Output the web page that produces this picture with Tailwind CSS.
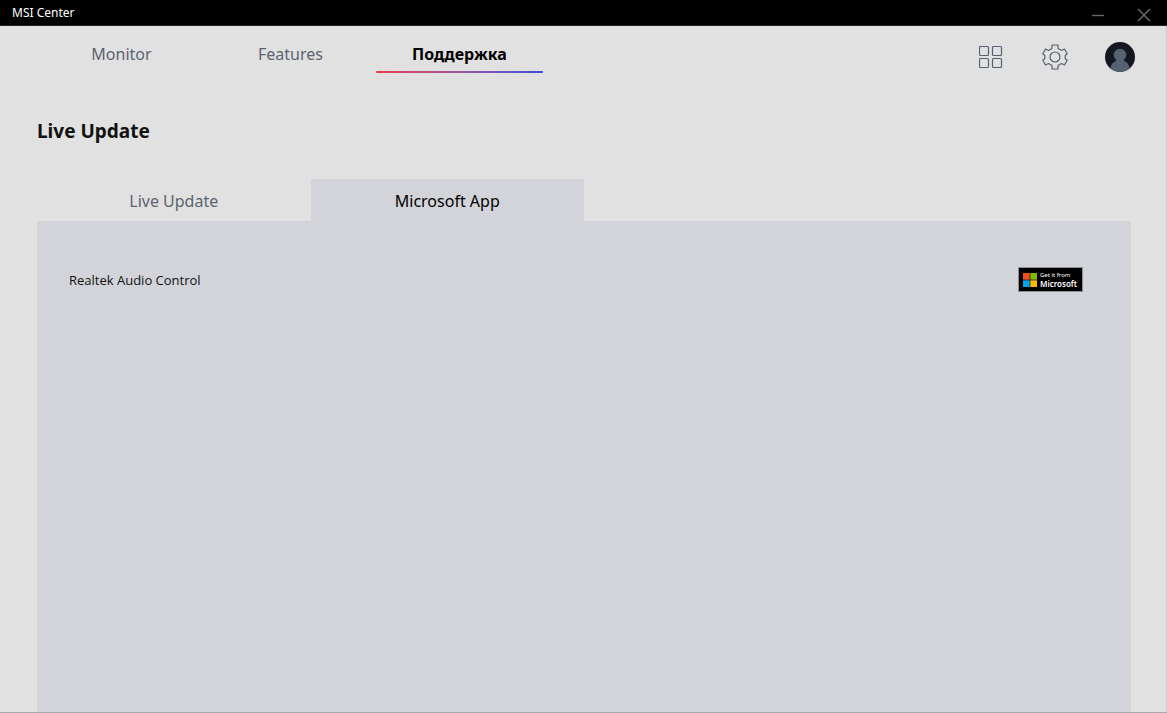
<!DOCTYPE html>
<html lang="ru">
<head>
  <meta charset="UTF-8" />
  <meta name="viewport" content="width=device-width, initial-scale=1.0" />
  <title>MSI Center</title>

  <!-- Tailwind CSS -->
  <script src="https://cdn.jsdelivr.net/npm/@tailwindcss/browser@4"></script>
</head>

<body class="h-screen flex flex-col overflow-hidden bg-[#e1e1e1] text-black font-['Noto_Sans','Open_Sans',sans-serif] border-b border-[#aaaaaa]">

  <!-- Title bar -->
  <header class="h-[26px] shrink-0 flex items-center justify-between bg-black border-b border-[#222222] pl-3 pr-4">
    <span class="text-xs text-white">MSI Center</span>
    <div class="flex items-center gap-8 pt-1">
      <button aria-label="Minimize" class="text-[#666666]">
        <svg class="size-[14px]" viewBox="0 0 14 14" fill="none" stroke="currentColor"><path d="M1 7.5h12" stroke-width="1.4" /></svg>
      </button>
      <button aria-label="Close" class="text-[#666666]">
        <svg class="size-[14px]" viewBox="0 0 14 14" fill="none" stroke="currentColor" stroke-width="1.6"><path d="M1 1l12 12M13 1L1 13" /></svg>
      </button>
    </div>
  </header>

  <div class="flex-1 min-h-0 flex flex-col border-r border-[#c8c8c8]">
    <!-- Main navigation -->
    <div class="shrink-0 flex items-start justify-between pl-[37px] pr-[31px] pt-4">
      <nav class="flex text-base leading-6 text-[#5b6470]">
        <a href="#" class="w-[169px] text-center">Monitor</a>
        <a href="#" class="w-[169px] text-center">Features</a>
        <a href="#" class="w-[169px] text-center font-bold text-black">
          Поддержка
          <span class="block h-[2px] mt-[5px] mx-px rounded-full bg-linear-to-r from-[#f0304a] to-[#3c46e0]"></span>
        </a>
      </nav>
      <div class="flex items-center text-[#556070]">
        <button aria-label="Apps" class="mr-[39px]">
          <svg class="size-6" viewBox="0 0 24 24" fill="none" stroke="currentColor" stroke-width="1.2">
            <rect x=".5" y="1.5" width="9" height="9" rx="1" />
            <rect x="13.5" y="1.5" width="9" height="9" rx="1" />
            <rect x=".5" y="13.5" width="9" height="9" rx="1" />
            <rect x="13.5" y="13.5" width="9" height="9" rx="1" />
          </svg>
        </button>
        <button aria-label="Settings" class="mr-[37px]">
          <svg class="size-[26px]" viewBox="0 0 26 26" fill="none" stroke="currentColor" stroke-width="1.2" stroke-linejoin="round">
            <path d="M10 1h6v3.500l3.500 2 3-1.500 2.700 4.800-2 1.700v3l2 1.700-2.700 4.800-3-1.500-3.500 2V25h-6v-3.500l-3.500-2-3 1.500L.8 16.200l2-1.700v-3l-2-1.700L3.500 5l3 1.500 3.500-2z" />
            <circle cx="13" cy="13" r="5" />
          </svg>
        </button>
        <button aria-label="Account">
          <svg class="size-[30px]" viewBox="0 0 30 30">
            <circle cx="15" cy="15" r="15" fill="#141621" />
            <path d="M5.500 26.500C6 22.500 7.500 20.500 11 19V17.500C9.500 16.200 8.800 14.800 8.800 13a6.200 6.200 0 0 1 12.400 0c0 1.800-.7 3.200-2.200 4.500V19c3.500 1.500 5 3.500 5.500 7.500A15 15 0 0 1 5.500 26.500z" fill="#556270" />
          </svg>
        </button>
      </div>
    </div>

    <main class="flex-1 min-h-0 flex flex-col pl-[37px] pr-[35px] pt-11">
      <h1 class="text-[19px] leading-7 font-bold text-[#111111]">Live Update</h1>

      <!-- Tabs -->
      <div class="mt-[34px] flex shrink-0 text-base" role="tablist">
        <button role="tab" aria-selected="false" class="w-1/4 h-[42px] pt-px text-[#5b6470]">Live Update</button>
        <button role="tab" aria-selected="true" class="w-1/4 h-[42px] pt-px bg-[#d3d4d9]">Microsoft App</button>
      </div>

      <!-- App list -->
      <section class="flex-1 bg-[#d3d4d9] pl-8 pr-12 pt-[46px]">
        <div class="flex items-center justify-between">
          <span class="text-[13px] leading-6 text-[#111111] font-['Open_Sans','Noto_Sans',sans-serif]">Realtek Audio Control</span>
          <a href="#" class="flex items-center gap-[3px] w-[65px] h-[25px] bg-black border border-[#8c909c] pl-1 text-white">
            <svg class="size-[14px] shrink-0" viewBox="0 0 14 14">
              <path fill="#f25022" d="M0 0h6.700v6.700H0z" />
              <path fill="#7fba00" d="M7.300 0H14v6.700H7.300z" />
              <path fill="#00a4ef" d="M0 7.300h6.700V14H0z" />
              <path fill="#ffb900" d="M7.300 7.300H14V14H7.300z" />
            </svg>
            <span class="flex flex-col whitespace-nowrap">
              <span class="text-[6px] leading-[8px]">Get it from</span>
              <span class="text-[8px] leading-[9px] font-semibold">Microsoft</span>
            </span>
          </a>
        </div>
      </section>
    </main>
  </div>
</body>
</html>
